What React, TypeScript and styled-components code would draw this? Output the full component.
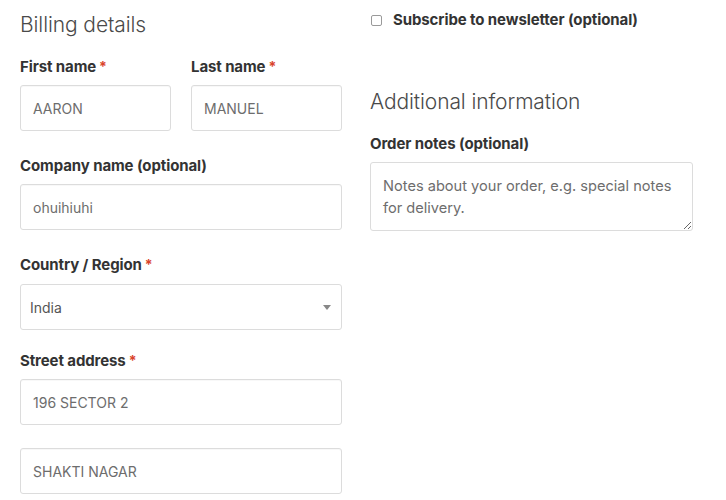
import React from "react";
import styled, { createGlobalStyle } from "styled-components";

const Global = createGlobalStyle`
  html, body { margin: 0; padding: 0; background: #fff; }
  body { font-family: "Inter", "Liberation Sans", sans-serif; color: #333; }
  * { box-sizing: border-box; }
`;

const Page = styled.div`
  display: grid;
  grid-template-columns: 322px 323px;
  column-gap: 28px;
  padding: 12px 20px 0 20px;
  align-items: start;
`;

const Column = styled.div`
  display: flex;
  flex-direction: column;
`;

const Heading = styled.h3`
  margin: 0 0 19px 0;
  font-size: 21px;
  line-height: 25px;
  font-weight: 300;
  color: #4a4a4a;
  letter-spacing: -0.1px;
`;

const Field = styled.div<{ $gap?: number }>`
  display: flex;
  flex-direction: column;
  margin-bottom: ${(p) => p.$gap ?? 24}px;
`;

const Row = styled.div`
  display: grid;
  grid-template-columns: 151px 151px;
  column-gap: 20px;
`;

const Label = styled.label`
  font-size: 15px;
  line-height: 22px;
  font-weight: 700;
  color: #333;
  margin-bottom: 7px;
  letter-spacing: -0.1px;
`;

const Req = styled.span`
  color: #d9432b;
  font-size: 14px;
  margin-left: 3px;
`;

const Input = styled.input<{ $mt?: number }>`
  height: 46px;
  width: 100%;
  margin-top: ${(p) => p.$mt ?? 0}px;
  border: 1px solid #dcdcdc;
  border-radius: 3px;
  box-shadow: inset 0 1px 1px rgba(0, 0, 0, 0.03);
  background: #fff;
  padding: 0 12px;
  font-family: inherit;
  font-size: 14px;
  color: #6d6d6d;
  outline: none;
`;

const SelectBox = styled.div`
  height: 46px;
  margin-top: 1px;
  display: flex;
  align-items: center;
  justify-content: space-between;
  border: 1px solid #dcdcdc;
  border-radius: 3px;
  padding: 0 8px 0 9px;
  font-size: 14px;
  color: #555;
`;

const Caret = styled.span`
  width: 0;
  height: 0;
  border-left: 4px solid transparent;
  border-right: 4px solid transparent;
  border-top: 5px solid #888;
  margin-right: 2px;
`;

const CheckRow = styled.label`
  display: flex;
  align-items: center;
  gap: 11px;
  margin: -3px 0 58px 1px;
  font-size: 15px;
  line-height: 22px;
  font-weight: 700;
  color: #333;
  letter-spacing: -0.1px;
`;

const CheckBox = styled.span`
  width: 11px;
  height: 11px;
  border: 1px solid #9a9a9a;
  border-radius: 2px;
  background: #fff;
  flex: none;
`;

const TextArea = styled.textarea`
  height: 69px;
  width: 100%;
  border: 1px solid #dcdcdc;
  border-radius: 3px;
  padding: 12px 12px 8px;
  font-family: inherit;
  font-size: 14.6px;
  line-height: 22px;
  color: #6d6d6d;
  resize: vertical;
  outline: none;
  &::placeholder { color: #6d6d6d; opacity: 1; }
`;

export default function App() {
  return (
    <>
      <Global />
      <Page>
        <Column>
          <Heading>Billing details</Heading>
          <Row>
            <Field>
              <Label>First name<Req>*</Req></Label>
              <Input defaultValue="AARON" />
            </Field>
            <Field>
              <Label>Last name<Req>*</Req></Label>
              <Input defaultValue="MANUEL" />
            </Field>
          </Row>
          <Field>
            <Label>Company name (optional)</Label>
            <Input defaultValue="ohuihiuhi" />
          </Field>
          <Field $gap={20}>
            <Label>Country / Region<Req>*</Req></Label>
            <SelectBox>
              <span>India</span>
              <Caret />
            </SelectBox>
          </Field>
          <Field>
            <Label>Street address<Req>*</Req></Label>
            <Input defaultValue="196 SECTOR 2" />
            <Input $mt={23} defaultValue="SHAKTI NAGAR" />
          </Field>
        </Column>
        <Column>
          <CheckRow>
            <CheckBox />
            Subscribe to newsletter (optional)
          </CheckRow>
          <Heading>Additional information</Heading>
          <Field>
            <Label>Order notes (optional)</Label>
            <TextArea placeholder="Notes about your order, e.g. special notes for delivery." />
          </Field>
        </Column>
      </Page>
    </>
  );
}
